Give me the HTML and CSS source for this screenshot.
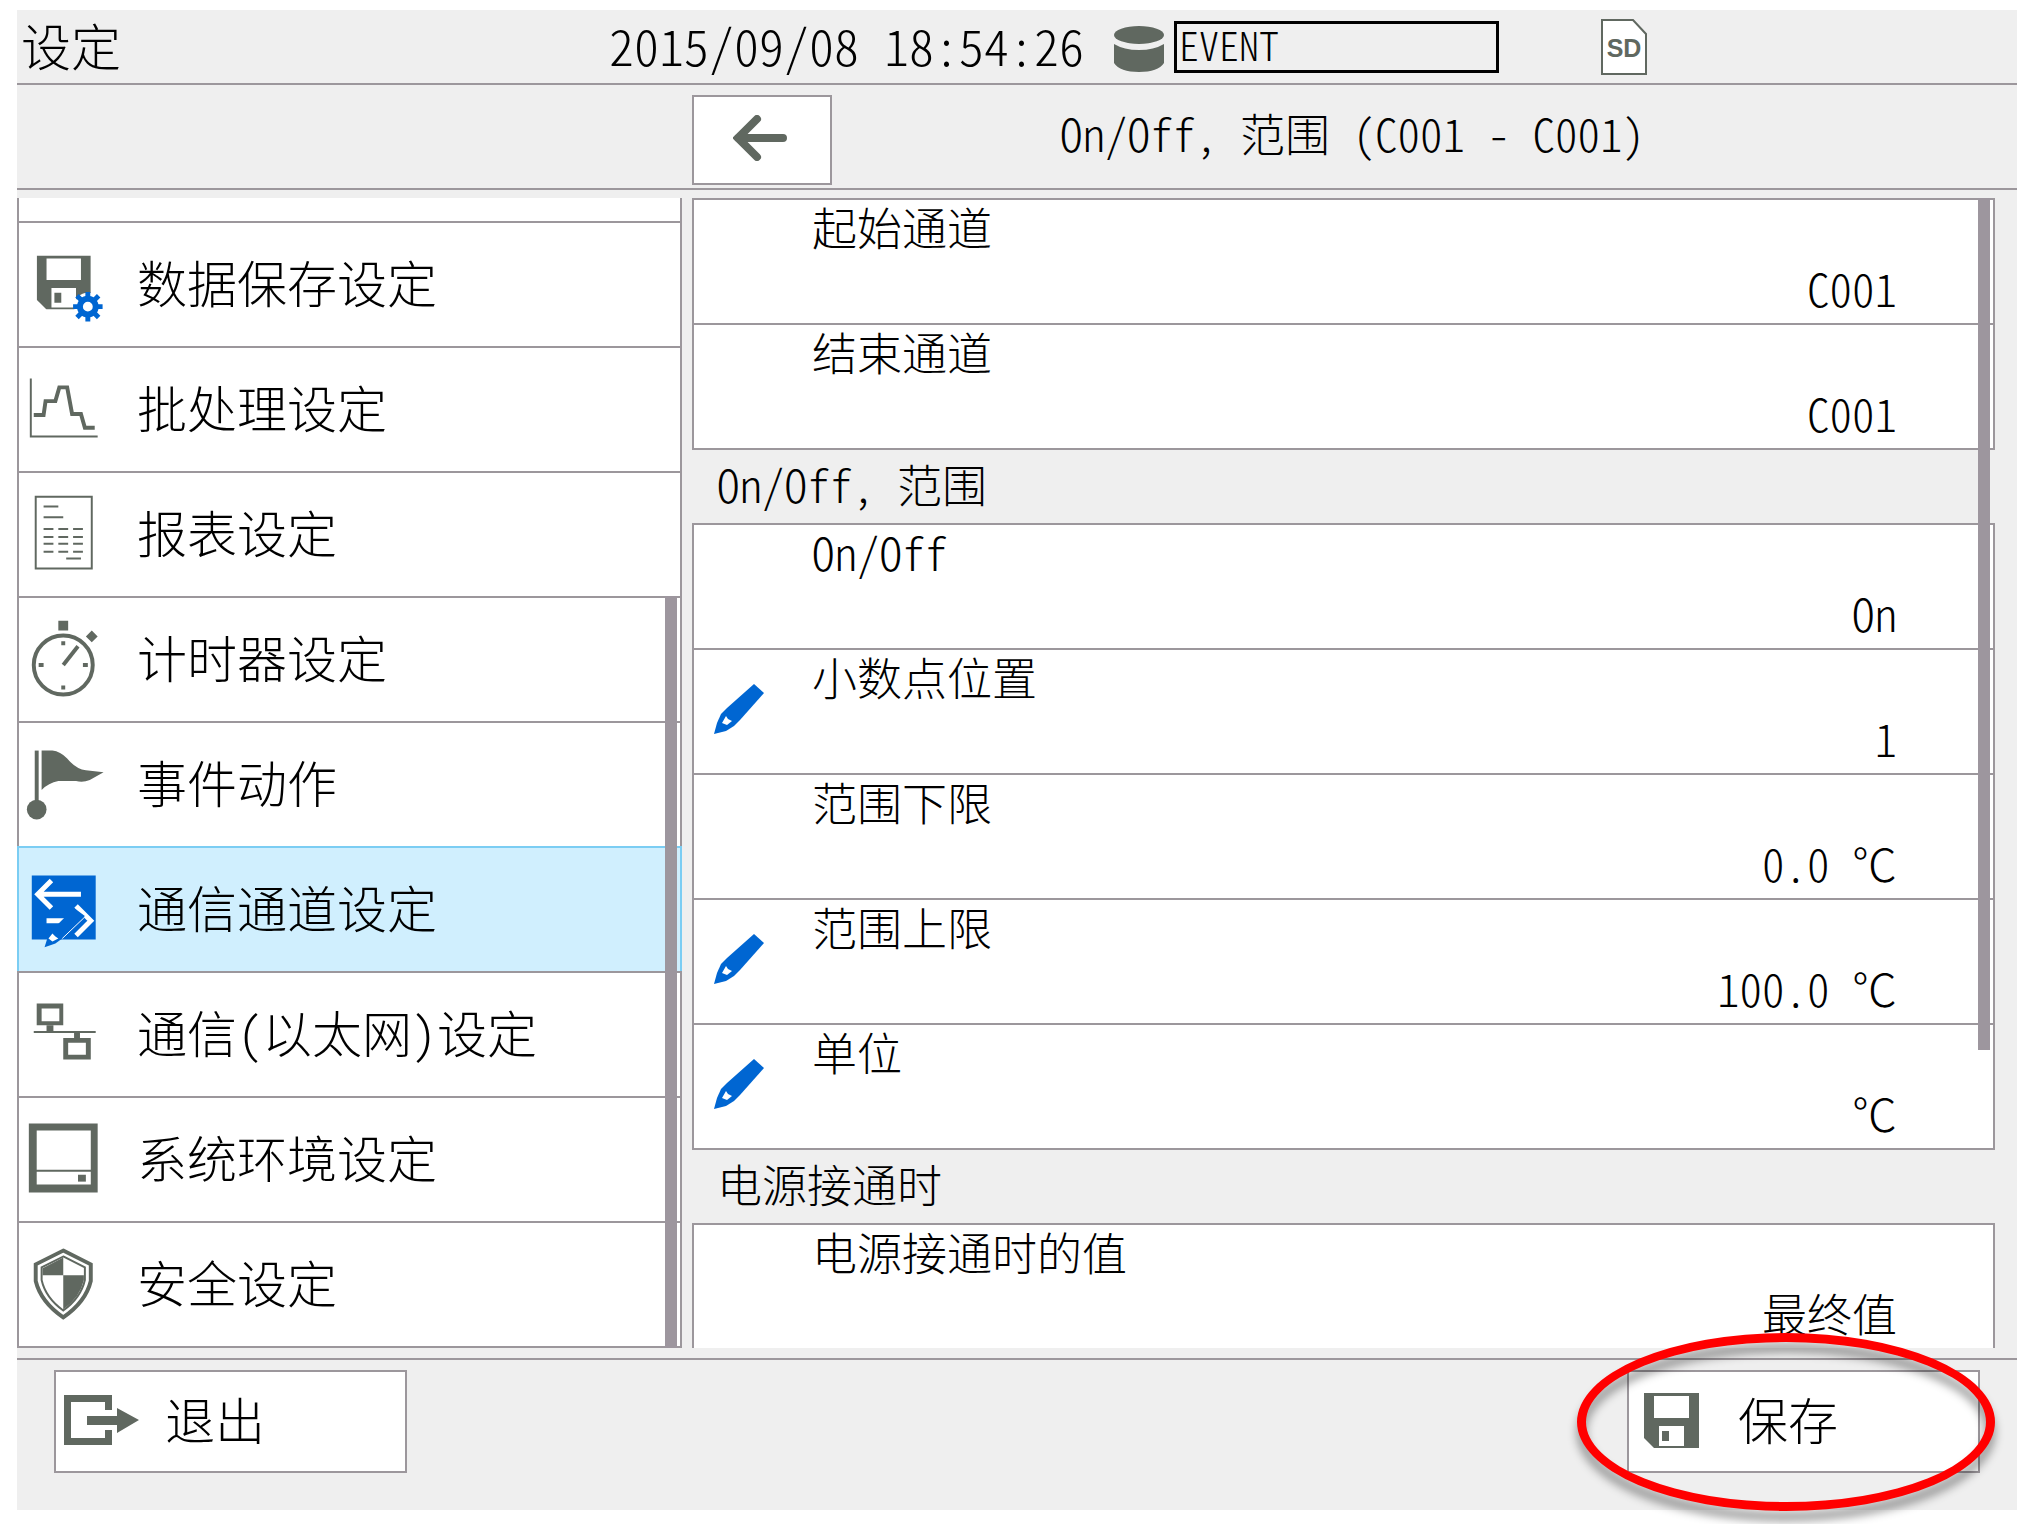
FILE: index.html
```html
<!DOCTYPE html>
<html lang="zh-CN">
<head>
    <meta charset="UTF-8">
    <meta name="viewport" content="width=device-width, initial-scale=1.0">
    <title>设定</title>
    <link rel="stylesheet" href="styles.css">
</head>
<body>
    <svg class="sprite" aria-hidden="true">
        <symbol id="floppy" viewBox="0 0 55 55">
            <path d="M0 0H55V55H10L0 45Z" fill="#606860"/>
            <path d="M10 3H45V25H10ZM15 33H40V53H15Z" fill="#fff"/>
            <path d="M18 38H25V48H18Z" fill="#606860"/>
        </symbol>
        <symbol id="pencil" viewBox="0 0 50 50">
            <path d="M40 0L50 9L26 36L20 42L12 47L0 50L3 39L7 30L13 24Z" fill="#0066d2"/>
            <path d="M12 32L14 35L18 37L13 41L8 39Z" fill="#fff"/>
        </symbol>
    </svg>

    <div class="screen">
        <header class="topbar">
            <h1 class="topbar-title">设定</h1>
            <time class="clock" datetime="2015-09-08T18:54:26">2015/09/08 18:54:26</time>
            <svg class="disk-icon" viewBox="0 0 50 46">
                <ellipse cx="25" cy="9" rx="25" ry="9"/>
                <path d="M0 18Q10 24 25 24T50 18V37Q44 46 25 46T0 37Z"/>
            </svg>
            <div class="event-box">EVENT</div>
            <svg class="sd-icon" viewBox="0 0 46 56">
                <path d="M1 1H32L45 15V55H1Z" fill="#fff" stroke="#606860" stroke-width="2"/>
                <text x="23" y="38" text-anchor="middle">SD</text>
            </svg>
        </header>

        <div class="subbar">
            <button type="button" class="back-button" aria-label="返回">
                <svg width="54" height="46" viewBox="0 0 54 46">
                    <path d="M24 4L5 23L24 42M5 23H50" class="line-thick"/>
                </svg>
            </button>
            <h2 class="subbar-title">On/Off, 范围 (C001 - C001)</h2>
        </div>

        <main class="content">
            <nav class="menu">
                <div class="menu-cut"></div>
                <a href="#" class="menu-item">
                    <svg class="menu-icon" viewBox="0 0 120 123">
                        <use href="#floppy" x="18" y="32" width="55" height="55"/>
                        <circle cx="70" cy="84" r="14" fill="#fff"/>
                        <circle cx="70" cy="84" r="8" fill="none" stroke="#0066d2" stroke-width="6"/>
                        <path d="M70 69V75M70 93V99M55 84H61M79 84H85M59 73L64 78M76 90L81 95M81 73L76 78M59 95L64 90" stroke="#0066d2" stroke-width="5"/>
                    </svg>
                    <span class="caption">数据保存设定</span>
                </a>
                <a href="#" class="menu-item">
                    <svg class="menu-icon" viewBox="0 0 120 123">
                        <path d="M12 30V89H80" class="line-thin"/>
                        <path d="M15 67H25L27 53H37L41 39H49L54 66H63L67 80H77" class="line"/>
                    </svg>
                    <span class="caption">批处理设定</span>
                </a>
                <a href="#" class="menu-item">
                    <svg class="menu-icon" viewBox="0 0 120 123">
                        <path d="M17 23H74V96H17Z" class="line-thin"/>
                        <path d="M25 33H40M25 44H45M48 86H63" class="line-thin"/>
                        <path d="M25 56H65M25 64H65M25 71H65M25 79H65" class="line-thin" stroke-dasharray="10 5"/>
                    </svg>
                    <span class="caption">报表设定</span>
                </a>
                <a href="#" class="menu-item">
                    <svg class="menu-icon" viewBox="0 0 120 123">
                        <circle cx="45" cy="67" r="30" class="line"/>
                        <path d="M45 67L60 48" class="line"/>
                        <path d="M40 22H50V32H40ZM74 32L80 38L74 44L68 38Z"/>
                        <path d="M43 43H47V47H43ZM20 65H25V69H20ZM65 65H70V69H65ZM43 88H47V92H43Z"/>
                    </svg>
                    <span class="caption">计时器设定</span>
                </a>
                <a href="#" class="menu-item">
                    <svg class="menu-icon" viewBox="0 0 120 123">
                        <path d="M16 27H20V80H16Z"/>
                        <circle cx="18" cy="87" r="10"/>
                        <path d="M23 27H34Q42 28 49 35Q58 46 68 47L86 49L72 57Q65 60 58 58H40Q30 60 23 67Z"/>
                    </svg>
                    <span class="caption">事件动作</span>
                </a>
                <a href="#" class="menu-item menu-item-active" aria-current="page">
                    <svg class="menu-icon" viewBox="0 0 120 123">
                        <path d="M13 27H78V92H13Z" fill="#0066d2"/>
                        <path d="M18 46H63M33 32L19 46L33 60M28 73H46M58 58L73 73L58 88" fill="none" stroke="#fff" stroke-width="5"/>
                        <path d="M56 60L67 68L44 91L37 96L26 100L30 87L33 83Z" fill="#0066d2"/>
                        <path d="M44 91L66 70" stroke="#fff"/>
                        <path d="M34 86L37 89L40 91L34 94L30 91Z" fill="#fff"/>
                    </svg>
                    <span class="caption">通信通道设定</span>
                </a>
                <a href="#" class="menu-item">
                    <svg class="menu-icon" viewBox="0 0 120 123">
                        <path d="M18 30H45V52H18ZM23 35V48H41V35ZM45 65H73V87H45ZM50 70V82H68V70Z" fill-rule="evenodd"/>
                        <path d="M28 52H35V58H78V60H62V65H56V60H15V58H28Z"/>
                    </svg>
                    <span class="caption">通信(以太网)设定</span>
                </a>
                <a href="#" class="menu-item">
                    <svg class="menu-icon" viewBox="0 0 120 123">
                        <path d="M10 25H80V95H10ZM18 32V72H73V32ZM18 74V87H73V74Z" fill-rule="evenodd"/>
                        <path d="M60 77H68V84H60Z"/>
                    </svg>
                    <span class="caption">系统环境设定</span>
                </a>
                <a href="#" class="menu-item">
                    <svg class="menu-icon" viewBox="0 0 120 123">
                        <path d="M45 27L73 41V58Q68 79 45 95Q22 79 17 58V41Z" fill="#fff" stroke="#606860" stroke-width="4"/>
                        <path d="M45 33L67 44V57Q63 75 45 88Q27 75 23 57V44Z" class="line-thin"/>
                        <path d="M45 34V52H24V45ZM45 52H66V57Q62 75 45 87Z"/>
                    </svg>
                    <span class="caption">安全设定</span>
                </a>
                <span class="thumb menu-thumb"></span>
            </nav>

            <section class="settings">
                <div class="group">
                    <button type="button" class="row">
                        <span class="row-label">起始通道</span>
                        <span class="row-value">C001</span>
                    </button>
                    <button type="button" class="row">
                        <span class="row-label">结束通道</span>
                        <span class="row-value">C001</span>
                    </button>
                </div>

                <h3 class="group-title">On/Off, 范围</h3>
                <div class="group">
                    <button type="button" class="row">
                        <span class="row-label">On/Off</span>
                        <span class="row-value">On</span>
                    </button>
                    <button type="button" class="row">
                        <svg class="row-icon"><use href="#pencil"/></svg>
                        <span class="row-label">小数点位置</span>
                        <span class="row-value">1</span>
                    </button>
                    <button type="button" class="row">
                        <span class="row-label">范围下限</span>
                        <span class="row-value">0.0 ℃</span>
                    </button>
                    <button type="button" class="row">
                        <svg class="row-icon"><use href="#pencil"/></svg>
                        <span class="row-label">范围上限</span>
                        <span class="row-value">100.0 ℃</span>
                    </button>
                    <button type="button" class="row">
                        <svg class="row-icon"><use href="#pencil"/></svg>
                        <span class="row-label">单位</span>
                        <span class="row-value">℃</span>
                    </button>
                </div>

                <h3 class="group-title">电源接通时</h3>
                <div class="group group-open">
                    <button type="button" class="row">
                        <span class="row-label">电源接通时的值</span>
                        <span class="row-value">最终值</span>
                    </button>
                </div>
                <span class="thumb settings-thumb"></span>
            </section>
        </main>

        <footer class="actions">
            <button type="button" class="action-button">
                <svg class="action-icon" viewBox="0 0 109 99">
                    <path d="M8 23H56V38H49V30H15V66H49V58H56V73H8Z"/>
                    <path d="M31 44H61V36L83 48L61 61V53H31Z"/>
                </svg>
                <span class="caption">退出</span>
            </button>
            <div class="save-wrap">
                <button type="button" class="action-button">
                    <svg class="action-icon" viewBox="0 0 109 99">
                        <use href="#floppy" x="15" y="21" width="55" height="55"/>
                    </svg>
                    <span class="caption">保存</span>
                </button>
                <span class="highlight"></span>
            </div>
        </footer>
    </div>
</body>
</html>
```
FILE: styles.css
```css
* {
    box-sizing: border-box;
}

body {
    margin: 0;
    background: #fff;
    color: #000;
    font-family: "Noto Sans CJK SC", sans-serif;
    font-weight: 300;
    /* half-width latin, like the device font */
    font-feature-settings: "hwid";
    font-variant-ligatures: none;
}

h1, h2, h3 {
    margin: 0;
    font-weight: 300;
}

button {
    margin: 0;
    padding: 0;
    color: inherit;
    font: inherit;
    font-feature-settings: inherit;
    font-variant-ligatures: inherit;
    background: #fff;
    border: 2px solid #9c979c;
    border-radius: 0;
    cursor: pointer;
}

svg {
    display: block;
    flex: none;
    fill: #606860;
}

.sprite {
    position: absolute;
    width: 0;
    height: 0;
}

.line-thin, .line, .line-thick {
    fill: none;
    stroke: #606860;
    stroke-width: 2;
}

.line {
    stroke-width: 4;
}

.line-thick {
    stroke-width: 8;
    stroke-linecap: round;
}

.screen {
    display: flex;
    flex-direction: column;
    height: calc(100vh - 24px);
    margin: 10px 8px 14px 17px;
    background: #efefef;
}

/* top bar */
.topbar {
    display: flex;
    align-items: center;
    height: 75px;
    padding-left: 4px;
    border-bottom: 2px solid #9c979c;
}

.topbar-title, .clock {
    padding-bottom: 6px;
    font-size: 50px;
    line-height: 66px;
    white-space: nowrap;
}

.topbar-title {
    width: 588px;
}

.disk-icon {
    width: 50px;
    height: 46px;
    margin: 4px 10px 0 30px;
}

.event-box {
    width: 325px;
    height: 52px;
    border: 3px solid #000;
    padding-left: 2px;
    font-size: 40px;
    line-height: 40px;
}

.sd-icon {
    width: 46px;
    height: 56px;
    margin-left: 102px;
}

.sd-icon text {
    font: bold 25px "Liberation Sans", Arial, sans-serif;
}

/* title bar */
.subbar {
    display: grid;
    grid-template-columns: 140px 1fr 144px;
    height: 105px;
    padding-left: 675px;
    border-bottom: 2px solid #9c979c;
}

.back-button {
    display: flex;
    align-items: center;
    justify-content: center;
    height: 90px;
    margin-top: 10px;
    padding: 0 4px 4px 0;
}

.subbar-title {
    font-size: 45px;
    line-height: 96px;
    text-align: center;
}

/* lists */
.content {
    flex: 1;
    display: grid;
    grid-template-columns: 665px 1fr;
    gap: 10px;
    min-height: 0;
    padding: 8px 22px 10px 0;
}

.menu, .settings {
    position: relative;
}

.menu-cut {
    height: 23px;
    background: #fff;
    border: solid #9c979c;
    border-width: 0 2px;
}

.menu-item {
    display: flex;
    align-items: center;
    height: 125px;
    color: #000;
    font-size: 50px;
    text-decoration: none;
    background: #fff;
    border: solid #9c979c;
    border-width: 2px 2px 0;
}

.menu-item:last-of-type {
    height: 127px;
    border-bottom-width: 2px;
}

.menu-item-active {
    background: #d0effe;
    border-color: #7bcdf3;
}

.menu-icon {
    width: 118px;
    height: 123px;
}

.caption {
    padding-bottom: 8px;
}

.thumb {
    position: absolute;
    right: 5px;
    width: 12px;
    background: #9d969e;
}

.menu-thumb {
    top: 398px;
    bottom: 0;
}

.settings-thumb {
    top: 0;
    height: 852px;
}

.group {
    border: solid #9c979c;
    border-width: 0 2px 2px;
}

/* the list goes on below the fold */
.group-open {
    border-bottom: 0;
}

.row {
    position: relative;
    display: flex;
    flex-direction: column;
    align-items: flex-start;
    width: 100%;
    height: 125px;
    padding: 0 96px 0 118px;
    font-size: 45px;
    border-width: 2px 0 0;
}

.row-label {
    line-height: 54px;
}

.row-value {
    align-self: flex-end;
    line-height: 67px;
}

.row-icon {
    position: absolute;
    left: 20px;
    top: 34px;
    width: 50px;
    height: 50px;
}

.group-title {
    padding: 0 0 6px 25px;
    font-size: 45px;
    line-height: 67px;
}

/* bottom buttons */
.actions {
    display: flex;
    justify-content: space-between;
    align-items: flex-start;
    height: 152px;
    padding: 10px 37px 0;
    border-top: 2px solid #9c979c;
}

.action-button {
    display: flex;
    align-items: center;
    width: 353px;
    height: 103px;
    font-size: 50px;
}

.action-icon {
    width: 109px;
    height: 99px;
}

.save-wrap {
    position: relative;
}

.highlight {
    position: absolute;
    left: -50px;
    top: -37px;
    width: 418px;
    height: 178px;
    border: 9px solid #f00;
    border-radius: 50%;
    filter: drop-shadow(0 10px 5px rgba(0, 0, 0, 0.4));
    pointer-events: none;
}
```
